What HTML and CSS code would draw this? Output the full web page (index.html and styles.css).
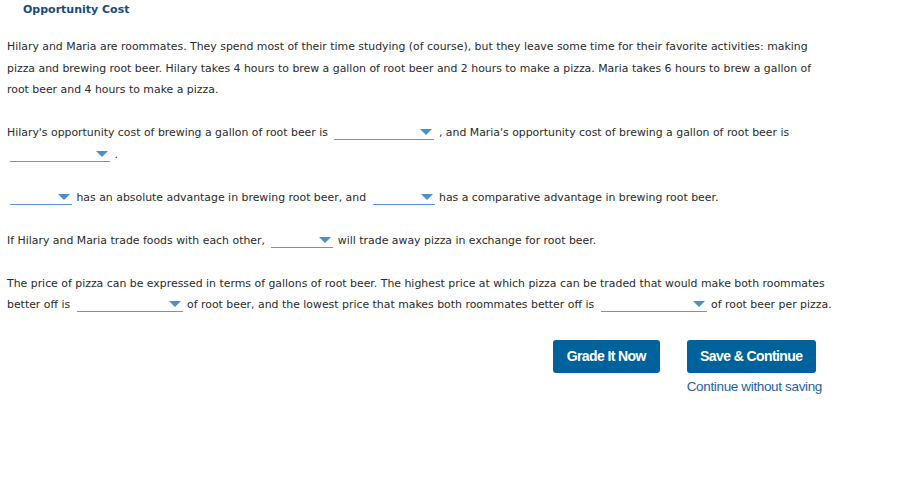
FILE: index.html
```html
<!DOCTYPE html>
<html>
<head>
<meta charset="utf-8">
<link rel="stylesheet" href="styles.css">
</head>
<body>
<div class="page">
  <h1 class="title">Opportunity Cost</h1>
  <p class="para">Hilary and Maria are roommates. They spend most of their time studying (of course), but they leave some time for their favorite activities: making pizza and brewing root beer. Hilary takes 4 hours to brew a gallon of root beer and 2 hours to make a pizza. Maria takes 6 hours to brew a gallon of root beer and 4 hours to make a pizza.</p>
  <p class="para">Hilary's opportunity cost of brewing a gallon of root beer is <span class="dd dd-md"></span> , and Maria's opportunity cost of brewing a gallon of root beer is <span class="dd dd-md"></span> .</p>
  <p class="para"><span class="dd dd-sm"></span> has an absolute advantage in brewing root beer, and <span class="dd dd-sm"></span> has a comparative advantage in brewing root beer.</p>
  <p class="para">If Hilary and Maria trade foods with each other, <span class="dd dd-sm"></span> will trade away pizza in exchange for root beer.</p>
  <p class="para">The price of pizza can be expressed in terms of gallons of root beer. The highest price at which pizza can be traded that would make both roommates better off is <span class="dd dd-lg"></span> of root beer, and the lowest price that makes both roommates better off is <span class="dd dd-lg"></span> of root beer per pizza.</p>
  <div class="actions">
    <button class="btn btn-grade">Grade It Now</button>
    <div class="save-col">
      <button class="btn btn-save">Save &amp; Continue</button>
      <a class="link" href="#">Continue without saving</a>
    </div>
  </div>
</div>
</body>
</html>
```
FILE: styles.css
```css
html, body {
  margin: 0;
  padding: 0;
  background: #ffffff;
}
.page {
  padding: 1px 80px 0 7px;
  font-family: "DejaVu Sans", Verdana, sans-serif;
  font-size: 10.9px;
  color: #2a2a2a;
}
.title {
  margin: 0 0 17px 16px;
  font-size: 11px;
  line-height: 18px;
  font-weight: bold;
  color: #1b4b7c;
}
.para {
  margin: 0 0 21.5px 0;
  line-height: 21.5px;
}
.dd {
  display: inline-block;
  position: relative;
  height: 15px;
  margin: 0 1px 0 3px;
  border-bottom: 1px solid #5b9bd5;
  vertical-align: -4px;
}
.dd::after {
  content: "";
  position: absolute;
  right: 2px;
  top: 5px;
  border-left: 6px solid transparent;
  border-right: 6px solid transparent;
  border-top: 6px solid #4a8fd0;
}
.dd-md { width: 100px; }
.dd-sm { width: 62px; }
.dd-lg { width: 106px; }
.actions {
  display: flex;
  justify-content: flex-end;
  align-items: flex-start;
  gap: 27px;
  margin-top: 24px;
  padding-right: 11px;
}
.save-col {
  display: flex;
  flex-direction: column;
  align-items: flex-start;
}
.btn {
  height: 33px;
  padding: 0;
  border: none;
  border-radius: 3px;
  background: #00629b;
  color: #ffffff;
  font-family: "Liberation Sans", Arial, sans-serif;
  font-size: 14px;
  font-weight: bold;
  letter-spacing: -0.6px;
  text-align: center;
}
.btn-grade { width: 107px; }
.btn-save { width: 129px; }
.link {
  margin-top: 6px;
  font-family: "Liberation Sans", Arial, sans-serif;
  font-size: 13.5px;
  letter-spacing: -0.35px;
  color: #1e62a0;
  text-decoration: none;
}
```
